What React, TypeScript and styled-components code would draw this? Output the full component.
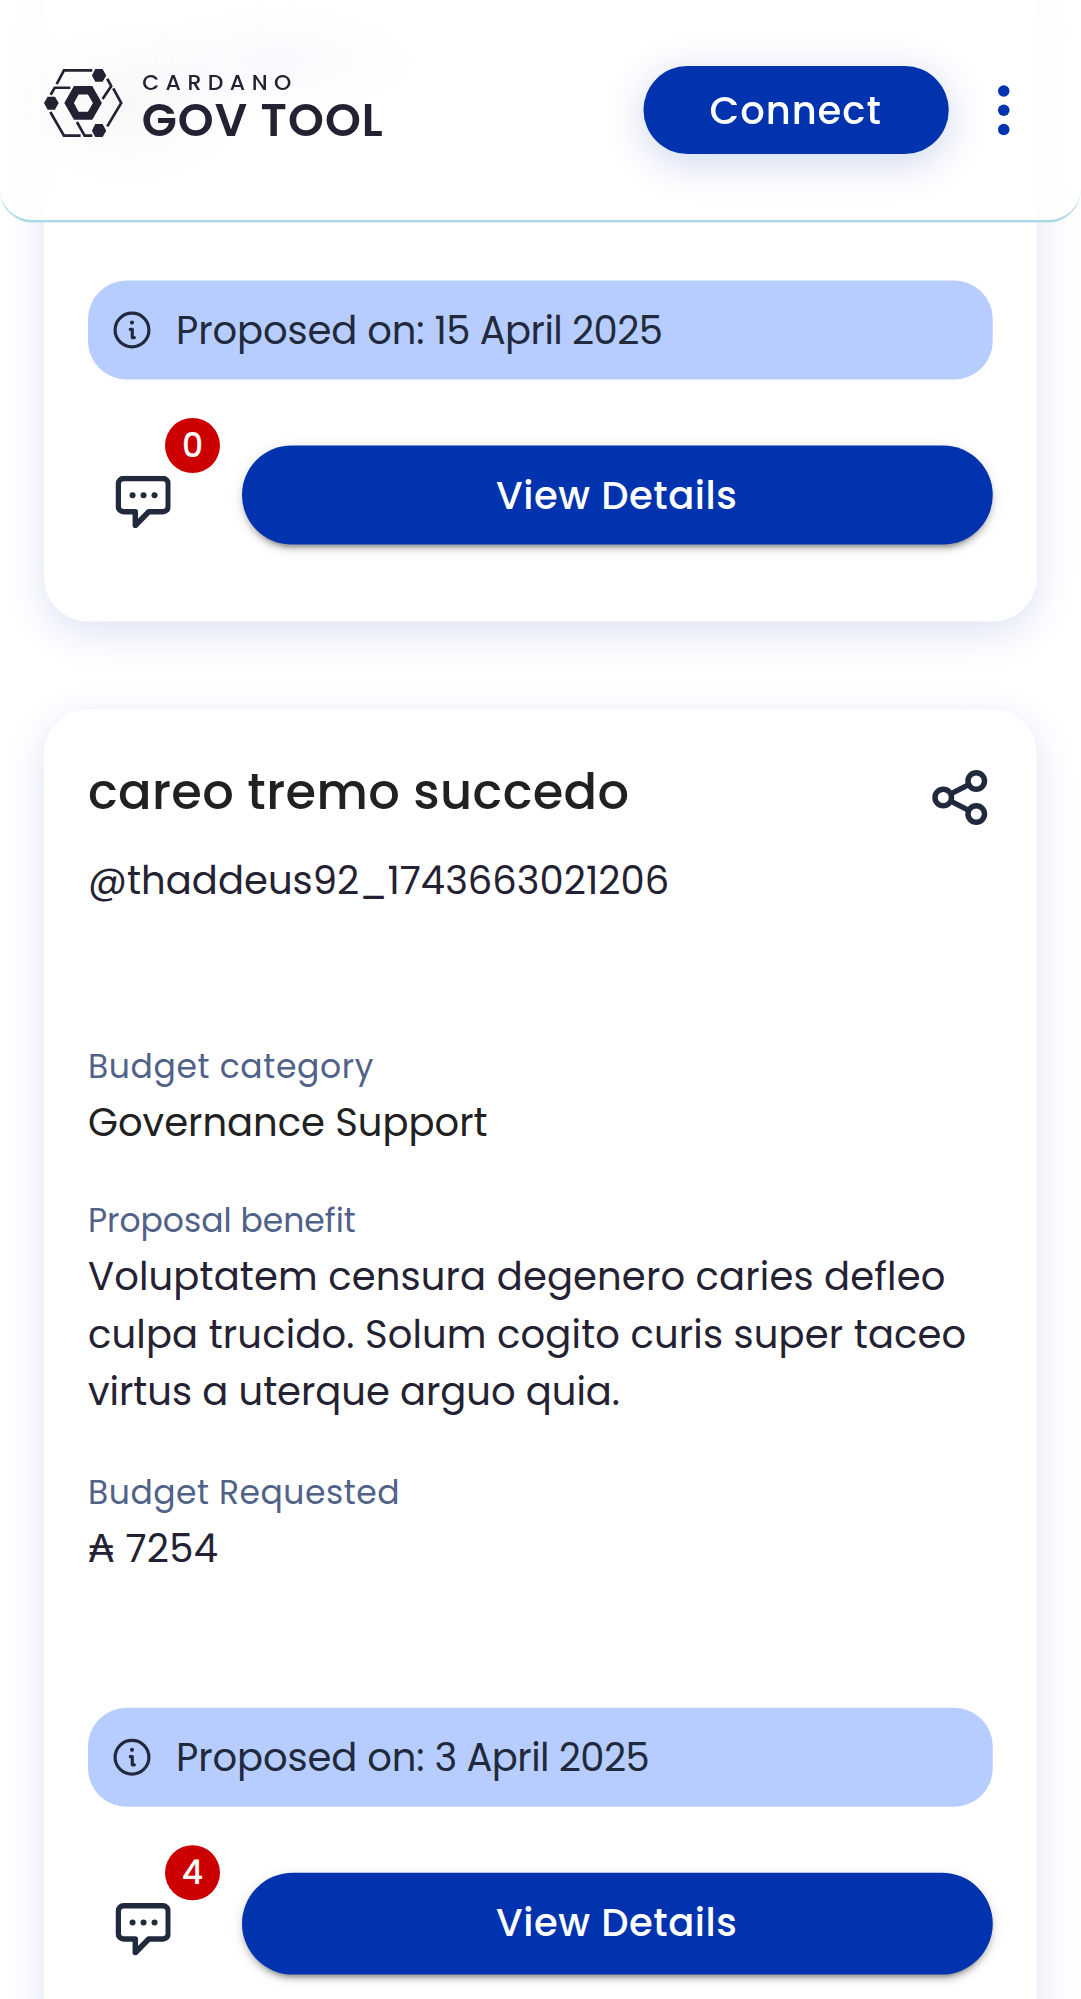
import React from 'react';
import styled, { createGlobalStyle } from 'styled-components';

const GlobalStyle = createGlobalStyle`
  * { box-sizing: border-box; }
  html, body { margin: 0; background: #fff; overflow: hidden; }
`;

/* The mobile layout is 393px wide and magnified to fill the window. */
const Viewport = styled.div`
  width: 1081px;
  height: 1999px;
  overflow: hidden;
`;

const Screen = styled.div`
  position: relative;
  width: 393.1px;
  height: 727px;
  overflow: hidden;
  transform: scale(2.75);
  transform-origin: 0 0;
  background: #fff;
  font-family: Poppins, Inter, "Open Sans", sans-serif;
  color: #242232;
`;

const Header = styled.header`
  position: absolute;
  inset: 0 0 auto 0;
  z-index: 2;
  height: 81px;
  padding: 0 16px;
  display: flex;
  align-items: flex-start;
  justify-content: space-between;
  border-bottom: 1px solid #add8e6;
  border-radius: 0 0 12px 12px;
  background:
    radial-gradient(ellipse 56px 22px at 100px 22px, rgba(226, 233, 244, 0.26), rgba(226, 233, 244, 0) 100%),
    radial-gradient(ellipse 46px 32px at 46px 38px, rgba(225, 225, 230, 0.24), rgba(225, 225, 230, 0) 100%),
    rgba(255, 255, 255, 0.7);
  backdrop-filter: blur(10px);
`;

const Brand = styled.div`
  display: flex;
  gap: 7px;
  padding-top: 25.2px;
`;

const BrandText = styled.div`
  display: flex;
  flex-direction: column;
  padding-top: 0.6px;
  white-space: nowrap;
  transform: translateY(-0.4px);
`;

const BrandTop = styled.span`
  font-size: 8px;
  line-height: 10px;
  font-weight: 500;
  letter-spacing: 2.35px;
`;

const BrandName = styled.span`
  font-size: 16.6px;
  line-height: 16px;
  font-weight: 600;
  letter-spacing: 0.42px;
  margin-top: 1px;
  margin-left: -0.2px;
`;

const Actions = styled.div`
  display: flex;
  align-items: center;
  gap: 8px;
  padding-top: 24px;
`;

const ConnectButton = styled.button`
  width: 111px;
  height: 32px;
  border: 0;
  border-radius: 16px;
  background: #0033ad;
  color: #fff;
  font: 500 14px/24px Poppins, Inter, sans-serif;
  letter-spacing: 0.35px;
  box-shadow: 0 3px 15px rgba(0, 51, 173, 0.2);
  padding: 0 0.6px 0 0;
`;

const List = styled.main`
  display: flex;
  flex-direction: column;
  gap: 32px;
  padding: 0 16px;
  margin-top: -40px;
`;

const Card = styled.article<{ $top: number }>`
  display: flex;
  flex-direction: column;
  padding: ${p => p.$top}px 16px 28px;
  border-radius: 16px;
  background: #fff;
  box-shadow: 0 4px 15px #dde3f5;
`;

const TitleRow = styled.div`
  display: flex;
  justify-content: space-between;
  height: 24px;
`;

const Title = styled.h2`
  margin: 0;
  font-size: 18px;
  line-height: 24px;
  font-weight: 500;
  letter-spacing: 0.128px;
  color: #212121;
`;

const ShareIcon = styled.svg`
  width: 24px;
  height: 24px;
  margin-top: 2.2px;
`;

const Handle = styled.p`
  margin: 9.8px 0 32.2px;
  font-size: 14px;
  line-height: 21px;
  letter-spacing: 0.015px;
`;

const Field = styled.section<{ $gap?: number }>`
  margin-top: ${p => p.$gap ?? 16}px;
`;

const Label = styled.div<{ $spacing?: number }>`
  font-size: 12px;
  line-height: 18px;
  letter-spacing: ${p => p.$spacing ?? 0}px;
  color: #506288;
`;

const Value = styled.div<{ $color?: string; $top?: number; $spacing?: number }>`
  margin-top: ${p => p.$top ?? 1.3}px;
  font-size: 14px;
  line-height: 21px;
  letter-spacing: ${p => p.$spacing ?? 0}px;
  color: ${p => p.$color ?? '#242232'};
`;

const LastWords = styled.span`
  letter-spacing: -0.01px;
`;

const DateBar = styled.div<{ $gap: number }>`
  display: flex;
  align-items: center;
  gap: 8px;
  height: 36px;
  margin-top: ${p => p.$gap}px;
  padding: 0 8px;
  border-radius: 14px;
  background: #b8cdff;
  color: #212a3d;
  font-size: 14px;
  line-height: 21px;
  letter-spacing: -0.04px;
`;

const DateText = styled.span`
  letter-spacing: -0.2px;
`;

const CardFooter = styled.div<{ $h: number }>`
  display: flex;
  gap: 8px;
  height: ${p => p.$h}px;
  margin-top: 23.9px;
`;

const Comments = styled.div`
  position: relative;
  width: 48px;
  padding: 11px 0 0 9.8px;
`;

const Badge = styled.span`
  position: absolute;
  top: -10px;
  left: 28px;
  width: 20px;
  height: 20px;
  border-radius: 50%;
  background: #c00;
  color: #fff;
  font-size: 12px;
  font-weight: 500;
  line-height: 20px;
  text-align: center;
`;

const DetailsButton = styled.button<{ $h: number }>`
  flex: 1;
  height: ${p => p.$h}px;
  padding: 0 0.6px ${p => p.$h - 36}px 0;
  border: 0;
  border-radius: 18.5px;
  background: #0033ad;
  color: #fff;
  font: 500 14px/24px Poppins, Inter, sans-serif;
  letter-spacing: 0.2px;
  box-shadow: 0 3px 1px -2px rgba(0, 0, 0, 0.2), 0 2px 2px rgba(0, 0, 0, 0.14), 0 1px 5px rgba(0, 0, 0, 0.12);
`;

const Logo = () => (
  <svg width="28.7" height="25.2" viewBox="27 42 237 208" fill="#242232">
    <path d="M171 62l10-19h22l11 19-11 19h-22zM27 145l11-19h22l11 19-11 20H38zM171 228l10-20h22l11 20-11 19h-22z" />
    <path fillRule="evenodd" d="M88 145l29-51h55l29 51-29 50h-55zM117 145l14 26h28l15-26-15-26h-28z" />
    <path
      d="M65 88l22-41h85M47 120l12-21h47M217 72l12 22-26 39M235 101l24 44-42 70M46 172l41 71h50M126 202l23 41h23"
      fill="none" stroke="#242232" strokeWidth="8"
    />
  </svg>
);

const MenuIcon = () => (
  <svg width="24" height="24" viewBox="0 0 24 24" fill="#0033ad">
    <circle cx="12" cy="5.1" r="2.1" /><circle cx="12" cy="12.1" r="2.1" /><circle cx="12" cy="19.1" r="2.1" />
  </svg>
);

const InfoIcon = () => (
  <svg width="16" height="16" viewBox="0 0 16 16" fill="none" stroke="#212a3d" strokeWidth="1.15" strokeLinecap="round" strokeLinejoin="round">
    <circle cx="8" cy="8" r="6.15" />
    <path d="M7.35 7.75h.75v3h.75" />
    <circle cx="8" cy="5.3" r=".75" fill="#212a3d" stroke="none" />
  </svg>
);

const ChatIcon = () => (
  <svg width="20.3" height="19.2" viewBox="0 0 20.3 19.2" fill="none" stroke="#212a3d" strokeWidth="2" strokeLinejoin="round">
    <path d="M3 1h14.2a2 2 0 0 1 2 2v8.1a2 2 0 0 1-2 2h-5.1l-4.9 5v-5H3a2 2 0 0 1-2-2V3a2 2 0 0 1 2-2z" />
    <g fill="#212a3d" stroke="none"><circle cx="6.2" cy="7.1" r="1.1" /><circle cx="10.2" cy="7.1" r="1.1" /><circle cx="14.2" cy="7.1" r="1.1" /></g>
  </svg>
);

const Share = () => (
  <ShareIcon viewBox="0 0 24 24" fill="none" stroke="#212a3d" strokeWidth="2">
    <circle cx="18" cy="6" r="3" /><circle cx="6" cy="12" r="3" /><circle cx="18" cy="18" r="3" />
    <path d="M8.7 10.7l6.6-3.4M8.7 13.3l6.6 3.4" />
  </ShareIcon>
);

interface ProposedProps { date: string; gap: number; comments: number; height: number }

function Proposed({ date, gap, comments, height }: ProposedProps) {
  return (
    <>
      <DateBar $gap={gap}><InfoIcon /><span>Proposed on: <DateText>{date}</DateText></span></DateBar>
      <CardFooter $h={height}>
        <Comments><ChatIcon /><Badge>{comments}</Badge></Comments>
        <DetailsButton $h={height}>View Details</DetailsButton>
      </CardFooter>
    </>
  );
}

export default function App() {
  return (
    <Viewport>
      <GlobalStyle />
      <Screen>
        <Header>
          <Brand>
            <Logo />
            <BrandText><BrandTop>CARDANO</BrandTop><BrandName>GOV TOOL</BrandName></BrandText>
          </Brand>
          <Actions><ConnectButton>Connect</ConnectButton><MenuIcon /></Actions>
        </Header>
        <List>
          <Card $top={142.2}>
            <Proposed date="15 April 2025" gap={0} comments={0} height={36} />
          </Card>
          <Card $top={17.7}>
            <TitleRow><Title>careo tremo succedo</Title><Share /></TitleRow>
            <Handle>@thaddeus92_1743663021206</Handle>
            <Field>
              <Label $spacing={0.23}>Budget category</Label>
              <Value $color="#212121">Governance Support</Value>
            </Field>
            <Field>
              <Label>Proposal benefit</Label>
              <Value $top={0.6} $spacing={0.053}>
                Voluptatem censura degenero caries defleo culpa trucido. Solum cogito curis super taceo{' '}
                <LastWords>virtus a uterque arguo quia.</LastWords>
              </Value>
            </Field>
            <Field $gap={17.1}>
              <Label $spacing={0.19}>Budget Requested</Label>
              <Value $spacing={0.12}>₳ 7254</Value>
            </Field>
            <Proposed date="3 April 2025" gap={47} comments={4} height={37} />
          </Card>
        </List>
      </Screen>
    </Viewport>
  );
}
